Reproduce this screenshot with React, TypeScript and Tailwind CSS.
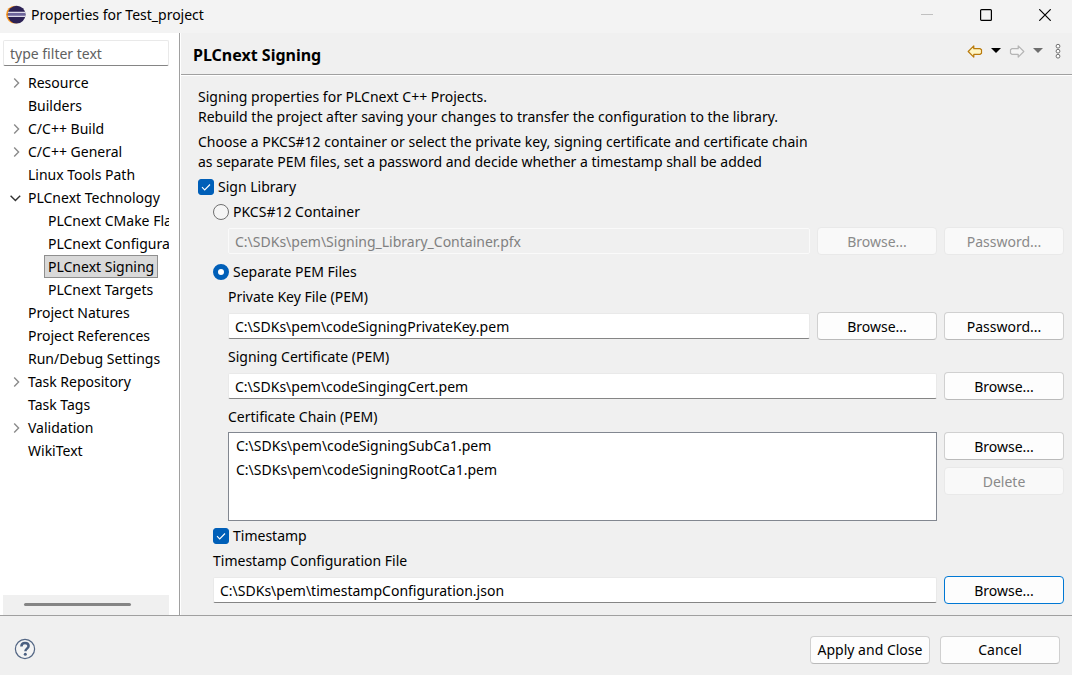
import { useState } from 'react';
import type { InputHTMLAttributes, ReactNode } from 'react';
import clsx from 'clsx';

type TreeItem = { label: string; state?: 'open' | 'closed'; child?: boolean };

const tree: TreeItem[] = [
  { label: 'Resource', state: 'closed' },
  { label: 'Builders' },
  { label: 'C/C++ Build', state: 'closed' },
  { label: 'C/C++ General', state: 'closed' },
  { label: 'Linux Tools Path' },
  { label: 'PLCnext Technology', state: 'open' },
  { label: 'PLCnext CMake Flags', child: true },
  { label: 'PLCnext Configuration', child: true },
  { label: 'PLCnext Signing', child: true },
  { label: 'PLCnext Targets', child: true },
  { label: 'Project Natures' },
  { label: 'Project References' },
  { label: 'Run/Debug Settings' },
  { label: 'Task Repository', state: 'closed' },
  { label: 'Task Tags' },
  { label: 'Validation', state: 'closed' },
  { label: 'WikiText' },
];

const chain = ['C:\\SDKs\\pem\\codeSigningSubCa1.pem', 'C:\\SDKs\\pem\\codeSigningRootCa1.pem'];

function Button({ children, disabled, focused }: { children: ReactNode; disabled?: boolean; focused?: boolean }) {
  return (
    <button
      type="button"
      disabled={disabled}
      className={clsx(
        'h-7 w-[120px] shrink-0 rounded border pt-px whitespace-nowrap',
        disabled && 'border-[#e9e9e9] bg-[#f9f9f9] text-[#8a8a8a]',
        !disabled && !focused && 'border-[#d0d0d0] border-b-[#bababa] bg-[#fdfdfd]',
        focused && 'border-[#0078d4] bg-[#fdfdfd]',
      )}
    >
      {children}
    </button>
  );
}

function TextField({ className, ...props }: InputHTMLAttributes<HTMLInputElement>) {
  return (
    <input
      type="text"
      className={clsx(
        'h-[26px] min-w-0 flex-1 rounded-xs border border-[#e9e9e9] border-b-[#858585] bg-white px-1.5 outline-none',
        'disabled:border-[#fafafa] disabled:bg-[#f0f0f0] disabled:text-[#808080]',
        className,
      )}
      {...props}
    />
  );
}

function CheckBox({ children }: { children: ReactNode }) {
  return (
    <label className="flex h-5 items-center gap-1">
      <span className="grid size-4">
        <input
          type="checkbox"
          defaultChecked
          className="peer col-start-1 row-start-1 size-4 appearance-none rounded-[3px] border border-[#868686] bg-[#f5f5f5] checked:border-[#005fb8] checked:bg-[#005fb8]"
        />
        <svg viewBox="0 0 16 16" className="pointer-events-none invisible col-start-1 row-start-1 size-4 peer-checked:visible">
          <path d="M4 8.2 6.7 10.9 12 5.5" fill="none" stroke="#fff" strokeWidth="1.1" />
        </svg>
      </span>
      {children}
    </label>
  );
}

function Radio({ children, checked, onChange }: { children: ReactNode; checked: boolean; onChange: () => void }) {
  return (
    <label className="flex h-5 items-center gap-1">
      <input
        type="radio"
        name="container"
        checked={checked}
        onChange={onChange}
        className="size-4 appearance-none rounded-full border border-[#6f6f6f] bg-[#f5f5f5] checked:border-5 checked:border-[#005fb8] checked:bg-white"
      />
      {children}
    </label>
  );
}

function TitleBar() {
  return (
    <header className="flex h-[33px] shrink-0 items-center bg-[#f3f3f3] pb-1 pl-[6px]">
      {/* Eclipse sphere */}
      <svg viewBox="0 0 20 20" className="size-5">
        <circle cx="9" cy="9.6" r="8.9" fill="#f7941e" />
        <circle cx="10.6" cy="9.6" r="8.9" fill="#2c2255" />
        <path d="M2 7.2h17.2v4.6H2z" fill="#6d659b" />
        <path d="M2 7.4h17.2M2 11.4h17.2" stroke="#dedbea" strokeWidth="1.2" />
      </svg>
      <h1 className="ml-[5px] flex-1">Properties for Test_project</h1>
      <div className="flex gap-[5px]">
        <button type="button" aria-label="Minimize" className="grid h-7 w-[54px] place-items-center">
          <svg viewBox="0 0 12 12" className="size-3"><path d="M0 5.5h12" stroke="#c0c0c0" /></svg>
        </button>
        <button type="button" aria-label="Maximize" className="grid h-7 w-[54px] place-items-center">
          <svg viewBox="0 0 12 12" className="size-3">
            <rect x=".6" y=".6" width="10.8" height="10.8" rx="1" fill="none" stroke="#000" strokeWidth="1.2" />
          </svg>
        </button>
        <button type="button" aria-label="Close" className="grid h-7 w-[54px] place-items-center">
          <svg viewBox="0 0 12 12" className="size-3">
            <path d="M.3.3 11.7 11.7M11.7.3.3 11.7" stroke="#000" strokeWidth="1.2" />
          </svg>
        </button>
      </div>
    </header>
  );
}

function Chevron({ open }: { open: boolean }) {
  return (
    <svg viewBox="0 0 12 12" className="size-3">
      {open ? (
        <path d="M1.6 3.8 6.4 8.6 11.2 3.8" fill="none" stroke="#333" strokeWidth="1.4" />
      ) : (
        <path d="M5.2 1.4 9.6 6 5.2 10.6" fill="none" stroke="#8b8b8b" strokeWidth="1.4" />
      )}
    </svg>
  );
}

function Sidebar() {
  const [selected, setSelected] = useState('PLCnext Signing');

  return (
    <aside className="flex w-[179px] shrink-0 flex-col bg-white pt-[7px] pr-2.5 pl-[3px]">
      <div className="flex">
        <TextField aria-label="Filter" placeholder="type filter text" className="placeholder:text-[#616161]" />
      </div>
      <ul className="mt-[5px] flex-1 overflow-hidden">
        {tree.map(({ label, state, child }) => (
          <li key={label} className={clsx('flex h-[23px] items-center', child ? 'pl-[41px]' : 'pl-[6px]')}>
            {!child && (
              <span className="mr-[3px] grid w-3 shrink-0">
                {state && (
                  <button type="button" aria-label={`Toggle ${label}`}>
                    <Chevron open={state === 'open'} />
                  </button>
                )}
              </span>
            )}
            <button
              type="button"
              onClick={() => setSelected(label)}
              className={clsx(
                'h-[23px] border px-[3px] leading-5 whitespace-nowrap',
                selected === label ? 'border-[#8f8f8f] bg-[#d9d9d9]' : 'border-transparent',
              )}
            >
              {label}
            </button>
          </li>
        ))}
      </ul>
      <div className="h-5 bg-[#f0f0f0] pt-2 pl-[21px]">
        <div className="h-[3px] w-[107px] rounded-full bg-[#858585]" />
      </div>
    </aside>
  );
}

function PageHeader() {
  return (
    <div className="flex h-[42px] items-center border-b border-[#a0a0a0] pr-[11px] pl-3">
      <h2 className="flex-1 pt-[3px] text-base font-bold">PLCnext Signing</h2>
      <div className="flex items-center pb-1.5">
        <button type="button" aria-label="Back">
          <svg viewBox="0 0 16 14" className="h-3.5 w-4">
            <path d="M1.2 7.5 6.8 1.9V4.7H13.2L14.5 5.8V9.2L13.2 10.3H6.8V13.1Z" fill="#fff6c4" stroke="#b97a0b" strokeWidth="1.2" strokeLinejoin="round" />
          </svg>
        </button>
        <button type="button" aria-label="Back history" className="ml-2">
          <svg viewBox="0 0 10 5" className="h-[5px] w-2.5"><path d="M0 0h10L5 5Z" fill="#000" /></svg>
        </button>
        <button type="button" aria-label="Forward" className="ml-2">
          <svg viewBox="0 0 16 14" className="h-3.5 w-4">
            <path d="M14.8 7.5 9.2 1.9V4.7H2.8L1.5 5.8V9.2L2.8 10.3H9.2V13.1Z" fill="#f5f5f5" stroke="#b5b5b5" strokeWidth="1.2" strokeLinejoin="round" />
          </svg>
        </button>
        <button type="button" aria-label="Forward history" className="ml-2">
          <svg viewBox="0 0 10 5" className="h-[5px] w-2.5"><path d="M0 0h10L5 5Z" fill="#6e6e6e" /></svg>
        </button>
        <button type="button" aria-label="View menu" className="ml-3">
          <svg viewBox="0 0 6 16" className="h-4 w-1.5" fill="#fff" stroke="#707070">
            <circle cx="3" cy="3.2" r="1.9" />
            <circle cx="3" cy="8.2" r="1.9" />
            <circle cx="3" cy="13.2" r="1.9" />
          </svg>
        </button>
      </div>
    </div>
  );
}

function SigningForm() {
  const [mode, setMode] = useState<'pkcs' | 'pem'>('pem');
  const pem = mode === 'pem';

  return (
    <form className="flex flex-col gap-[5px] border-t border-white pt-[11px] pr-2 pb-[11px] pl-[17px]">
      <p>
        Signing properties for PLCnext C++ Projects.
        <br />
        Rebuild the project after saving your changes to transfer the configuration to the library.
      </p>
      <p>
        Choose a PKCS#12 container or select the private key, signing certificate and certificate chain
        <br />
        as separate PEM files, set a password and decide whether a timestamp shall be added
      </p>
      <CheckBox>Sign Library</CheckBox>

      <div className="flex flex-col gap-[5px] pl-[15px]">
        <Radio checked={!pem} onChange={() => setMode('pkcs')}>PKCS#12 Container</Radio>
        <div className="flex items-center gap-[7px] pb-0.5 pl-[15px]">
          <TextField aria-label="PKCS#12 Container file" disabled={pem} defaultValue={'C:\\SDKs\\pem\\Signing_Library_Container.pfx'} />
          <Button disabled={pem}>Browse...</Button>
          <Button disabled={pem}>Password...</Button>
        </div>

        <Radio checked={pem} onChange={() => setMode('pem')}>Separate PEM Files</Radio>
        <div className="flex flex-col gap-[5px] pl-[15px]">
          <label htmlFor="key">Private Key File (PEM)</label>
          <div className="flex items-center gap-[7px] pb-0.5">
            <TextField id="key" disabled={!pem} defaultValue={'C:\\SDKs\\pem\\codeSigningPrivateKey.pem'} />
            <Button disabled={!pem}>Browse...</Button>
            <Button disabled={!pem}>Password...</Button>
          </div>
          <label htmlFor="cert">Signing Certificate (PEM)</label>
          <div className="flex items-center gap-[7px] pb-0.5">
            <TextField id="cert" disabled={!pem} defaultValue={'C:\\SDKs\\pem\\codeSingingCert.pem'} />
            <Button disabled={!pem}>Browse...</Button>
          </div>
          <span id="chain">Certificate Chain (PEM)</span>
          <div className="flex gap-[7px]">
            <ul aria-labelledby="chain" className="h-[89px] min-w-0 flex-1 border border-[#828790] bg-white px-[7px] pt-px">
              {chain.map((file) => (
                <li key={file} className="h-6 leading-6">{file}</li>
              ))}
            </ul>
            <div className="flex flex-col gap-[7px]">
              <Button disabled={!pem}>Browse...</Button>
              <Button disabled>Delete</Button>
            </div>
          </div>
        </div>

        <CheckBox>Timestamp</CheckBox>
        <label htmlFor="timestamp">Timestamp Configuration File</label>
        <div className="flex items-center gap-[7px]">
          <TextField id="timestamp" defaultValue={'C:\\SDKs\\pem\\timestampConfiguration.json'} />
          <Button focused>Browse...</Button>
        </div>
      </div>
    </form>
  );
}

export default function App() {
  return (
    <div className="flex min-h-screen flex-col bg-[#f0f0f0] font-['Noto_Sans',sans-serif] text-sm text-black">
      <TitleBar />
      <div className="flex flex-1">
        <Sidebar />
        <main className="min-w-0 flex-1 border-l border-[#a0a0a0]">
          <div className="h-full border-l border-white">
            <PageHeader />
            <SigningForm />
          </div>
        </main>
      </div>
      <footer className="flex h-[60px] shrink-0 items-center gap-2.5 border-t border-[#a0a0a0] pt-2 pr-3 pl-[14px]">
        <button type="button" aria-label="Help" className="pb-0.5">
          <svg viewBox="0 0 22 22" className="size-[22px]">
            <circle cx="11" cy="11" r="9.6" fill="#f4f4f4" stroke="#536684" strokeWidth="1.2" />
            <path d="M7.4 8.6C7.4 6 9 5 11 5s3.6 1.1 3.6 3c0 2.6-3.2 2.6-3.2 5.2" fill="none" stroke="#4a5f80" strokeWidth="2.5" />
            <circle cx="11.3" cy="16.2" r="1.5" fill="#4a5f80" />
          </svg>
        </button>
        <span className="flex-1" />
        <Button>Apply and Close</Button>
        <Button>Cancel</Button>
      </footer>
    </div>
  );
}
